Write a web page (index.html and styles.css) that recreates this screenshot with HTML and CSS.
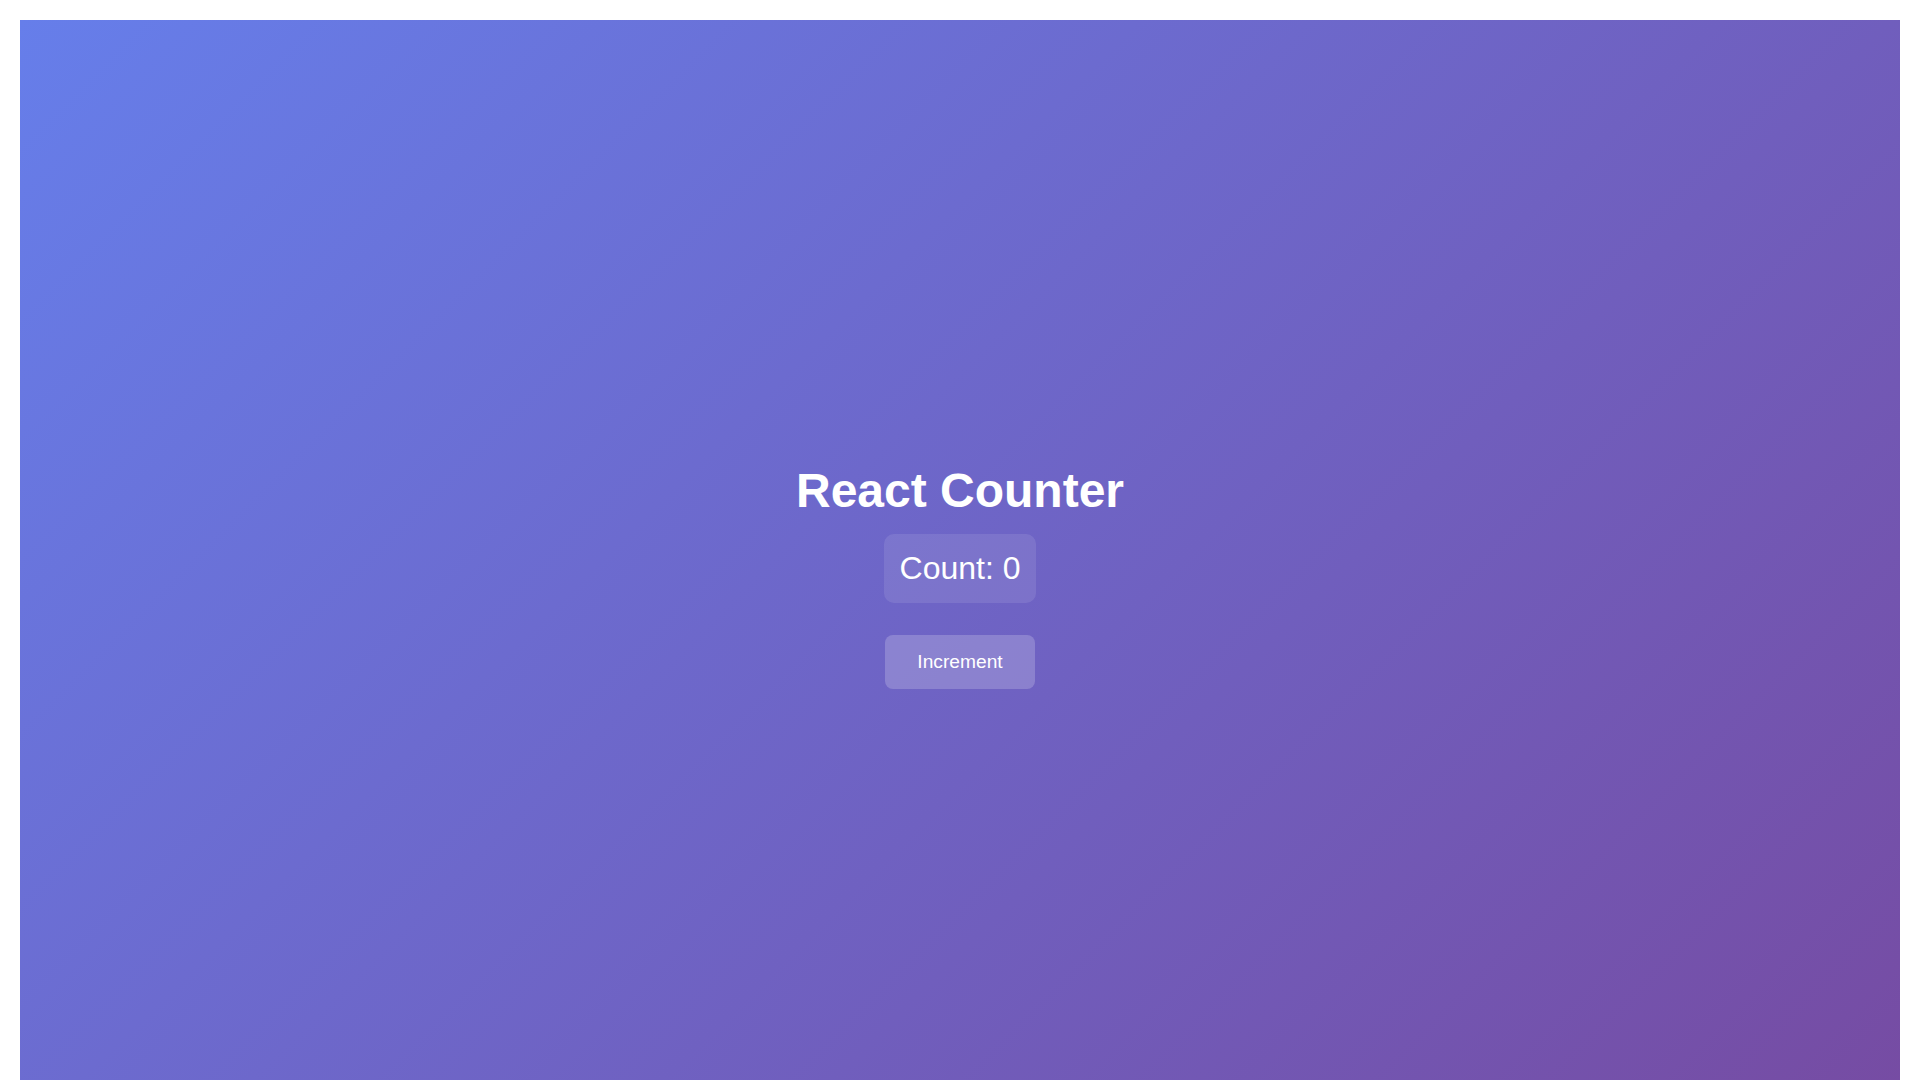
FILE: index.html
```html
<!DOCTYPE html>
<html lang="en">
<head>
<meta charset="utf-8">
<title>React Counter</title>
<link rel="stylesheet" href="styles.css">
</head>
<body>
<div class="app">
  <h1 class="title">React Counter</h1>
  <div class="count">Count: 0</div>
  <button class="btn" type="button">Increment</button>
</div>
</body>
</html>
```
FILE: styles.css
```css
html, body {
  margin: 0;
  padding: 0;
}
body {
  padding: 20px;
  background: #ffffff;
  font-family: "Liberation Sans", Arial, Helvetica, sans-serif;
}
.app {
  min-height: calc(100vh + 31px);
  display: flex;
  flex-direction: column;
  align-items: center;
  justify-content: center;
  background: linear-gradient(135deg, #667eea 0%, #764ba2 100%);
  color: #ffffff;
  text-align: center;
}
.title {
  margin: 0 0 16px;
  font-size: 48px;
  font-weight: 700;
  line-height: normal;
}
.count {
  font-size: 32px;
  padding: 16px;
  border-radius: 10px;
  background: rgba(255, 255, 255, 0.1);
  margin-bottom: 32px;
}
.btn {
  font-family: inherit;
  font-size: 19.2px;
  color: #ffffff;
  padding: 16px 32px;
  border: none;
  border-radius: 8px;
  background: rgba(255, 255, 255, 0.2);
  cursor: pointer;
}
```
